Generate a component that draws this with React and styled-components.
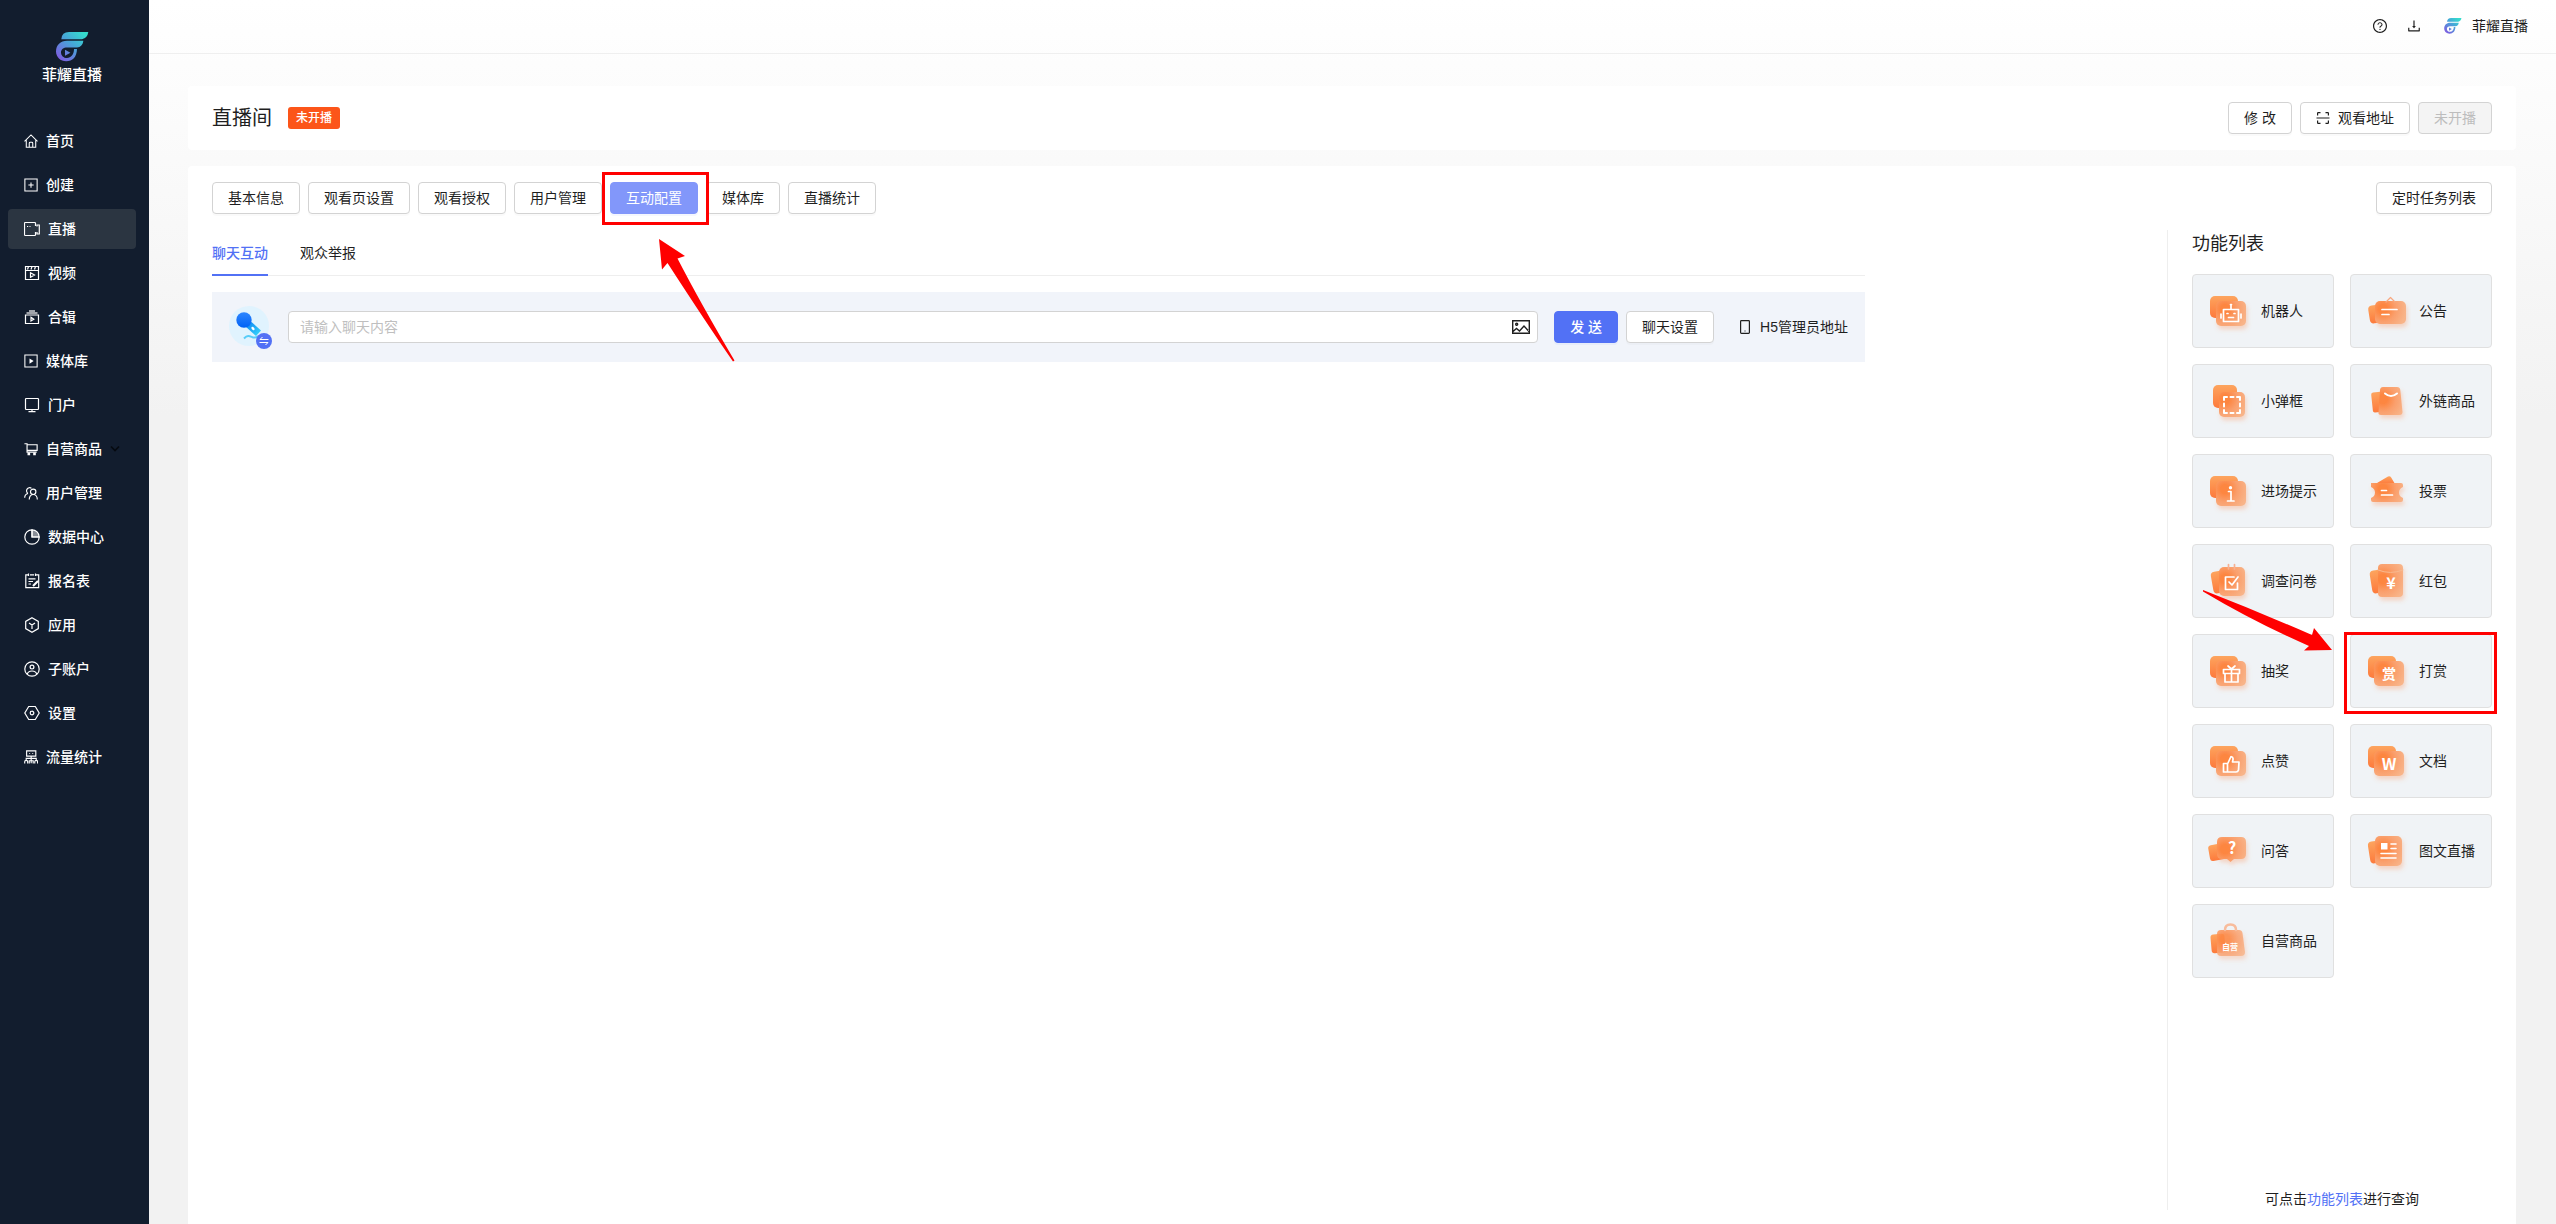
import React, { useId } from 'react';
import styled, { createGlobalStyle, css } from 'styled-components';
import { AiOutlineQuestionCircle, AiOutlineDownload } from 'react-icons/ai';

const primary = '#5271f5';
const ink = '#1f1f1f';

const GlobalStyle = createGlobalStyle`
  *, *::before, *::after { box-sizing: border-box; }
  body {
    margin: 0;
    color: ${ink};
    font: 14px/22px "Liberation Sans", "Noto Sans CJK SC", sans-serif;
  }
  button, input { font: inherit; color: inherit; }
  svg { display: block; flex: none; }
`;

/* ---------- page frame ---------- */

const Shell = styled.div`
  display: flex;
  height: 100vh;
  overflow: hidden;
`;

const Sidebar = styled.aside`
  flex: none;
  width: 149px;
  background: #121d2e;
  color: #fff;
`;

const Brand = styled.div`
  display: flex;
  flex-direction: column;
  align-items: center;
  gap: 2px;
  width: 144px;
  padding-top: 32px;
  height: 121px;
  font-size: 15px;
  font-weight: 500;
`;

const Menu = styled.nav`
  display: flex;
  flex-direction: column;
  gap: 4px;
  width: 144px;
  padding: 0 8px;
`;

const MenuLink = styled.a`
  display: flex;
  align-items: center;
  gap: 8px;
  height: 40px;
  padding: 0 16px;
  border-radius: 4px;
  color: #fff;
  font-weight: 500;
  white-space: nowrap;
  text-decoration: none;
  background: ${(p) => (p.$active ? '#2b3541' : 'transparent')};
`;

const Page = styled.div`
  display: flex;
  flex: 1;
  flex-direction: column;
  min-width: 0;
  background: linear-gradient(#fff, #f2f2f2 34%);
`;

const TopBar = styled.header`
  display: flex;
  align-items: center;
  justify-content: flex-end;
  gap: 18px;
  height: 54px;
  padding: 0 28px 2px;
  border-bottom: 1px solid #efefef;
`;

const IconButton = styled.button`
  display: flex;
  padding: 0;
  border: 0;
  background: none;
  font-size: 16px;
`;

const Account = styled.a`
  display: flex;
  align-items: center;
  gap: 10px;
  margin-left: 4px;
  color: ${ink};
  text-decoration: none;
`;

const Content = styled.main`
  display: flex;
  flex: 1;
  flex-direction: column;
  gap: 16px;
  min-height: 0;
  padding: 32px 40px 0 39px;
`;

const RoomCard = styled.section`
  display: flex;
  align-items: center;
  gap: 16px;
  height: 64px;
  padding: 0 24px;
  border-radius: 4px;
  background: #fff;
`;

const RoomTitle = styled.h1`
  margin: 0;
  font-size: 20px;
  line-height: 28px;
  font-weight: 400;
`;

const StatusTag = styled.span`
  padding: 0 8px;
  border-radius: 3px;
  background: #fc5519;
  color: #fff;
  font-size: 12px;
  font-weight: 500;
`;

const ButtonRow = styled.div`
  display: flex;
  gap: 8px;
  margin-left: ${(p) => (p.$end ? 'auto' : '0')};
`;

const Button = styled.button`
  display: flex;
  align-items: center;
  justify-content: center;
  gap: 8px;
  height: 32px;
  padding: 0 15px;
  border: 1px solid #d3d3d3;
  border-radius: 4px;
  background: #fff;
  box-shadow: 0 2px 0 rgba(0, 0, 0, 0.02);
  white-space: nowrap;
  ${(p) =>
    p.$tone &&
    css`
      border-color: ${p.$tone};
      background: ${p.$tone};
      color: #fff;
      box-shadow: 0 2px 0 rgba(82, 113, 245, 0.06);
      font-weight: ${p.$strong ? 500 : 400};
    `}
  &:disabled {
    background: #f4f4f4;
    color: #bdbdbd;
    box-shadow: none;
  }
`;

const Panel = styled.section`
  display: flex;
  flex: 1;
  flex-direction: column;
  gap: 16px;
  min-height: 0;
  padding: 16px 24px 14px;
  border-radius: 4px 4px 0 0;
  background: #fff;
`;

const PanelHead = styled.div`
  display: flex;
  justify-content: space-between;
`;

const Workspace = styled.div`
  display: grid;
  grid-template-columns: minmax(0, 1fr) 325px;
  gap: 302px;
  flex: 1;
  min-height: 0;
`;

/* ---------- chat ---------- */

const ChatTabs = styled.div`
  display: flex;
  gap: 32px;
  height: 46px;
  margin-bottom: 16px;
  box-shadow: inset 0 -1px #eee;
`;

const ChatTab = styled.button`
  padding: 2px 0 0;
  border: 0;
  border-bottom: 2px solid ${(p) => (p.$active ? primary : 'transparent')};
  background: none;
  color: ${(p) => (p.$active ? primary : ink)};
  font-weight: ${(p) => (p.$active ? 500 : 400)};
`;

const ChatBar = styled.form`
  display: flex;
  align-items: center;
  gap: 16px;
  height: 70px;
  padding: 0 17px;
  background: #f1f4fa;
`;

const MessageBox = styled.div`
  display: flex;
  flex: 1;
  align-items: center;
  height: 32px;
  padding: 0 7px 0 11px;
  border: 1px solid #d3d3d3;
  border-radius: 4px;
  background: #fff;
`;

const MessageInput = styled.input`
  flex: 1;
  min-width: 0;
  padding: 0;
  border: 0;
  outline: 0;
  background: none;
  &::placeholder { color: #bfbfbf; }
`;

const AdminLink = styled.a`
  display: flex;
  align-items: center;
  gap: 8px;
  margin-left: 8px;
  color: ${ink};
  text-decoration: none;
`;

/* ---------- features ---------- */

const FeaturePanel = styled.aside`
  display: flex;
  flex-direction: column;
  padding-left: 24px;
  border-left: 1px solid #eee;
`;

const FeatureTitle = styled.h2`
  margin: 0 0 16px;
  font-size: 18px;
  line-height: 28px;
  font-weight: 400;
`;

const FeatureGrid = styled.div`
  display: grid;
  grid-template-columns: repeat(2, minmax(0, 1fr));
  gap: 16px;
`;

const FeatureButton = styled.button`
  display: flex;
  align-items: center;
  gap: 8px;
  width: 100%;
  height: 74px;
  padding: 0 12px;
  border: 1px solid #e0e0e0;
  border-radius: 4px;
  background: #f0f3f6;
  text-align: left;
  white-space: nowrap;
`;

const Hint = styled.p`
  margin: auto 0 0;
  text-align: center;
`;

const HintLink = styled.a`
  color: ${primary};
  text-decoration: none;
`;

/* ---------- callouts ---------- */

const Marked = styled.div`
  position: relative;
`;

const Frame = styled.span`
  position: absolute;
  z-index: 1;
  inset: ${(p) => p.$inset};
  border: 3px solid #f00;
  pointer-events: none;
`;

const Arrow = styled.svg`
  position: absolute;
  z-index: 2;
  left: ${(p) => p.$left}px;
  top: ${(p) => p.$top}px;
  fill: #f00;
  pointer-events: none;
`;

/* ---------- drawings ---------- */

function Logo({ width, height }) {
  const id = useId();
  return (
    <svg width={width} height={height} viewBox="0 0 33 30">
      <defs>
        <linearGradient id={id} x1="1" y1="0" x2="0" y2="1">
          <stop offset="0.1" stopColor="#35dccd" />
          <stop offset="0.45" stopColor="#46a6d8" />
          <stop offset="0.9" stopColor="#7c5fe0" />
        </linearGradient>
      </defs>
      <path
        fill={`url(#${id})`}
        d="M5.3 7.2Q5.8 0 13 0H32.3Q31.5 6 26 7.2ZM27.3 8.7H11C4.5 8.7 0 13 0 19.5 0 25 4.5 29.3 10.2 29.3 16.5 29.3 20.8 25 21 17L18 17C18 22.5 15 26 11 26 7.5 26 5 23.4 5 20.4 5 17.5 7.5 15.5 11 15.5H21C24.5 15.3 27 12.5 27.3 8.7ZM9 17.8 14.4 20.8 9 23.8Z"
      />
    </svg>
  );
}

const menuIcons = {
  home: <path d="M.6 8.300 8 1l7.400 7.300M2.600 7v8.200h10.800V7M6 15v-4.500q0-1 1-1h2q1 0 1 1V15" />,
  create: <path d="M1 1.200h14v13.600H1zM8 5v6M5 8h6" />,
  live: <path d="M11.500 5V2.300q0-.8-.8-.8H1.300q-.8 0-.8.8v11.400q0 .8.8.8h9.400q.8 0 .8-.8V11M13 5.500V4h2.300v9H13v-2M3 5.500h1.200M5.500 5.500h1" />,
  video: <path d="M1.500 1.500h13v13h-13zM1.500 5.500h13M4.500 1.500l-1 3M8 1.500l-1 3M11.500 1.500l-1 3M6.500 7.800l4 2.200-4 2.200z" />,
  album: <><path d="M1.500 6h13v8.500h-13zM7 8.300 9.800 10.200 7 12z" /><path d="M2.500 4h11M5 2h6" strokeWidth="2" opacity=".6" /></>,
  media: <><path d="M1 1.200h14v13.600H1z" /><path d="M6.300 5 11 8l-4.700 3z" fill="#fff" stroke="none" /></>,
  portal: <path d="M1.500 2.300q0-.8.8-.8h11.400q.8 0 .8.8v9.400q0 .8-.8.8H2.300q-.8 0-.8-.8zM8 12.500v2M4.500 14.700h7" />,
  cart: <><path d="M.5 2h3v9.500h11M3.500 3.200H15V9.500H3.500" strokeWidth="1.300" /><path d="M4 12h3v3H4zM10.500 12h3v3h-3z" fill="#fff" stroke="none" /></>,
  users: <path d="M4.500 8.500A3.600 3.600 0 1 1 8.500 2.500M.8 13.500c0-2.500 1.500-4.500 3.700-5M10.500 3.500a3.100 3.100 0 1 1 0 6.200 3.100 3.100 0 0 1 0-6.200M6 15.500c0-3.300 1.800-5.800 4.500-5.800s4.700 2.500 4.700 5.800" strokeWidth="1.300" />,
  pie: <><path d="M8 .8A7.200 7.200 0 1 0 15.200 8H8z" /><path d="M8 .8A7.200 7.200 0 0 1 15.200 8H8z" fill="#fff" fillOpacity=".5" /></>,
  form: <><path d="M4 1.800H1.800v12.900h12.900V1.800H12M6 1.800h4M4.500.500v2.500M11.500.500v2.500M4.500 5.800h7M4.500 8.500h4.500M4.500 11h2.500" /><path d="M9 13l5-5" strokeWidth="2.200" /></>,
  app: <path d="M8 .8l6.300 3.600v7.200L8 15.200l-6.300-3.600V4.400zM5 6l3 2 3-2M8 8v4" />,
  person: <path d="M8 .8a7.200 7.200 0 1 1 0 14.400A7.200 7.200 0 0 1 8 .8M8 4.200a1.900 1.900 0 1 1 0 3.800 1.900 1.900 0 0 1 0-3.800M3.300 13.200c.5-2.200 2-3.200 4.700-3.200s4.200 1 4.700 3.200" />,
  setting: <path d="M4.700 1.500h6.600L15.200 8l-3.900 6.500H4.700L.8 8zM8 6.200a1.800 1.800 0 1 1 0 3.600 1.800 1.800 0 0 1 0-3.600" />,
  flow: <path d="M3 1h10.500v6H3zM8.200 7v8M2.500 11.500v-2h11.500v2M.8 15.300v-2q0-1.500 1.700-1.500t1.700 1.500v2M6 15.300v-3h4.500v3M12.300 15.300v-2q0-1.500 1.600-1.500t1.600 1.500v2M6 4h1M9.500 4h1" strokeWidth="1.300" />,
};

const MenuIcon = ({ name, size }) => (
  <svg width={size} height={size} viewBox="0 0 16 16" fill="none" stroke="#fff" strokeWidth="1.200">
    {menuIcons[name]}
  </svg>
);

const Chevron = () => (
  <svg width="10" height="8" viewBox="0 0 10 8" fill="none" stroke="#060a10" strokeWidth="1.600">
    <path d="M1 1.500l4 4 4-4" />
  </svg>
);

const ScanIcon = () => (
  <svg width="14" height="14" viewBox="0 0 14 14" fill="none" stroke={ink} strokeWidth="1.200">
    <path d="M1.600 4.500V2.200q0-.6.6-.6h2.300M9.500 1.600h2.300q.6 0 .6.6v2.300M12.400 9.500v2.300q0 .6-.6.6H9.500M4.500 12.400H2.200q-.6 0-.6-.6V9.500M.500 7h13" />
  </svg>
);

const PhoneIcon = () => (
  <svg width="14" height="14" viewBox="0 0 14 14" fill="none" stroke={ink} strokeWidth="1.200">
    <rect x="2.600" y=".6" width="8.800" height="12.800" rx=".8" />
    <path d="M6.500 11h1" />
  </svg>
);

const PictureIcon = () => (
  <svg width="18" height="14" viewBox="0 0 18 14" fill="none" stroke={ink} strokeWidth="1.400">
    <path d="M.7.700h16.600v12.600H.700zM1 11.500l3.500-3 3 2.500 4.500-5 5 5.500" />
    <circle cx="4.700" cy="4.200" r="1" />
  </svg>
);

function MicAvatar() {
  const id = useId();
  return (
    <svg width="43" height="44" viewBox="1 0 43 44">
      <defs>
        <linearGradient id={`${id}h`} x1="0" y1="0" x2="0" y2="1">
          <stop stopColor="#2c86ff" />
          <stop offset="1" stopColor="#0062f5" />
        </linearGradient>
        <linearGradient id={`${id}b`} x1="0" y1="0" x2="1" y2="1">
          <stop stopColor="#0a7df2" />
          <stop offset="1" stopColor="#3be0fb" />
        </linearGradient>
      </defs>
      <circle cx="21" cy="21" r="20" fill="#e0f3fe" />
      <path d="M16 33.500c4-4 6-2 9-1 2 .5 3-.5 5-1" fill="none" stroke="#58cdf8" strokeWidth="2" />
      <path d="M17.500 21.500 23.500 17 33 25.500 28 31z" fill={`url(#${id}b)`} />
      <ellipse cx="25" cy="23.500" rx="1.300" ry="2" fill="#fff" transform="rotate(-40 25 23.500)" />
      <circle cx="16" cy="15" r="7.700" fill={`url(#${id}h)`} />
      <circle cx="36" cy="36" r="8" fill={primary} />
      <path d="M32 34.500h8.500M34.500 32 32 34.500M31.500 37.500h8.500L37.500 40" fill="none" stroke="#fff" strokeWidth="1" />
    </svg>
  );
}

const back = {
  wide: <rect x="5" y="9" width="28" height="22" rx="5" />,
  square: <rect x="8" y="8" width="24" height="23" rx="5" />,
  notice: <rect x="6" y="18" width="14" height="18" rx="4" transform="rotate(-9 13 27)" />,
  survey: <rect x="7" y="14" width="14" height="22" rx="4" transform="rotate(-10 14 25)" />,
  qa: <rect x="4" y="17" width="18" height="16" rx="3" transform="rotate(-10 13 25)" />,
  bag: <rect x="9" y="15" width="14" height="20" rx="2" transform="rotate(-6 16 25)" />,
  packet: <rect x="8" y="13" width="14" height="23" rx="4" transform="rotate(-9 15 25)" />,
  article: <rect x="6" y="14" width="14" height="22" rx="4" transform="rotate(-9 13 25)" />,
  shop: <rect x="6" y="17" width="14" height="19" rx="3" transform="rotate(-5 13 26)" />,
  ticket: <path d="M14 16 25 9.500q2-1 3 .8L32 17z" />,
};

const front = {
  wide: <rect x="11" y="14" width="30" height="25" rx="5" />,
  square: <rect x="14" y="15" width="26" height="25" rx="5" />,
  notice: <rect x="12" y="14" width="31" height="23" rx="5" />,
  bag: <path d="M19 10h15q3 0 3.300 3L39.500 35q0 3-3 3H18q-3 0-2.500-3L17 13q.3-3 3-3z" />,
  ticket: <path d="M8 16h30q2 0 2 2v2q-4 1.500-4 5.500t4 5.500v2q0 2-2 2H10q-2 0-2-2v-2q4-1.500 4-5.500T8 20z" />,
  sheet: <rect x="14" y="10" width="26" height="29" rx="5" />,
  packet: <rect x="15" y="7" width="25" height="33" rx="4" />,
  bubble: <path d="M17 10h19q5 0 5 5v12q0 5-5 5h-7l-3.500 3-3.500-3h-5q-5 0-5-5V15q0-5 5-5z" />,
  page: <rect x="12" y="9" width="27" height="30" rx="5" />,
  shop: <path d="M17 13h17q3 0 3.500 3L40 35q0 4-4 4H16q-4 0-4-4V17q0-4 4-4z" opacity=".85" />,
};

const glyphText = (text, x, y, size) => (
  <text
    x={x}
    y={y}
    fontSize={size}
    fontWeight="700"
    fontFamily='"Noto Sans CJK SC", sans-serif'
    textAnchor="middle"
    fill="#fff"
    stroke="none"
  >
    {text}
  </text>
);

const featureArt = {
  robot: ['wide', 'wide', <path d="M18.500 22.500h15v12h-15zM26 18v4M16 27v4M36 27v4M22 26.500h1M29 26.500h1M23.500 30.500h5M25.500 17.500h1" />],
  notice: ['notice', 'notice', <><path d="M19 22.500h15M19 27.500h7" /><path d="M23 15l4.500-4.500L32 15" stroke="#f8a880" strokeWidth="1.200" /></>],
  popup: ['square', 'square', <path d="M19 23v-3h3M25.500 20h3M32 20h3v3M35 26.500v3M35 33v3h-3M28.500 36h-3M22 36h-3v-3M19 29.500v-3" strokeWidth="2" />],
  goods: ['bag', 'bag', <path d="M22 16.500q6 5 12 0" strokeWidth="2" />],
  enter: ['wide', 'wide', <><circle cx="25.500" cy="20.800" r="1.700" fill="#fff" stroke="none" /><path d="M23.500 24.500h2.500V34M22.500 34h6.500" /></>],
  vote: ['ticket', 'ticket', <path d="M18.500 23.500h5M18.500 28h11" />],
  survey: ['survey', 'sheet', <><path d="M29 20h-8.500v12.500h12V26M24 25l3 3 6-8" /><path d="M23.500 7.500V12M29.500 7.500V12" stroke="#f8b090" /></>],
  packet: ['packet', 'packet', <><path d="M15 13q12.500 5 25 0" stroke="#f8b98f" strokeWidth="1" />{glyphText('¥', 28, 32, 16)}</>],
  lottery: ['wide', 'wide', <path d="M18.500 22.500h16v4h-16zM20 26.500v8.500h13v-8.500M26.500 22.500V35M23 19l3.500 3 3.500-3" />],
  reward: ['wide', 'wide', glyphText('赏', 26, 32, 14)],
  like: ['wide', 'wide', <path d="M18.500 26.500h4V35h-4zM22.500 27l3.500-7.500q2.500.5 2 3L27.500 25H34L33.500 33q-.5 2-2.500 2h-8.500z" />],
  doc: ['wide', 'wide', glyphText('W', 26, 33, 16)],
  qa: ['qa', 'bubble', glyphText('?', 27, 27, 16)],
  article: ['article', 'page', <><path d="M18 16h6.500v6.500H18z" fill="#fff" stroke="none" /><path d="M28 17h5M28 21.500h5M18 26.500h15M18 31h15" strokeWidth="1.600" /></>],
  shop: ['shop', 'shop', <><path d="M20 13q0-5.500 5.500-5.500T31 13" stroke="#f8bc9c" strokeWidth="2.500" />{glyphText('自营', 25, 33, 8)}</>],
};

function FeatureIcon({ name }) {
  const id = useId();
  const [backShape, frontShape, glyph] = featureArt[name];
  return (
    <svg width="48" height="48" viewBox="0 0 48 48">
      <defs>
        <linearGradient id={`${id}b`} x1="0" y1="0" x2="0" y2="1">
          <stop stopColor="#fda45e" />
          <stop offset="1" stopColor="#fd7a3c" />
        </linearGradient>
        <radialGradient id={`${id}f`} gradientUnits="userSpaceOnUse" cx="20" cy="22" r="23">
          <stop offset="0.200" stopColor="#fd8641" />
          <stop offset="0.550" stopColor="#fa9f6c" />
          <stop offset="1" stopColor="#f8b489" />
        </radialGradient>
        <filter id={`${id}s`} x="-30%" y="-30%" width="170%" height="180%">
          <feDropShadow dx="1.500" dy="3.500" stdDeviation="2" floodColor="#fd8a50" floodOpacity="0.300" />
        </filter>
      </defs>
      <g fill={`url(#${id}b)`}>{back[backShape]}</g>
      <g fill={`url(#${id}f)`} filter={`url(#${id}s)`}>{front[frontShape]}</g>
      <g fill="none" stroke="#fff" strokeWidth="1.700" strokeLinecap="round" strokeLinejoin="round">
        {glyph}
      </g>
    </svg>
  );
}

/* ---------- data ---------- */

const menu = [
  ['home', '首页', 14],
  ['create', '创建', 14],
  ['live', '直播', 16],
  ['video', '视频', 16],
  ['album', '合辑', 16],
  ['media', '媒体库', 14],
  ['portal', '门户', 16],
  ['cart', '自营商品', 14],
  ['users', '用户管理', 14],
  ['pie', '数据中心', 16],
  ['form', '报名表', 16],
  ['app', '应用', 16],
  ['person', '子账户', 16],
  ['setting', '设置', 16],
  ['flow', '流量统计', 14],
];

const tabs = ['基本信息', '观看页设置', '观看授权', '用户管理', '互动配置', '媒体库', '直播统计'];

const features = [
  ['robot', '机器人'],
  ['notice', '公告'],
  ['popup', '小弹框'],
  ['goods', '外链商品'],
  ['enter', '进场提示'],
  ['vote', '投票'],
  ['survey', '调查问卷'],
  ['packet', '红包'],
  ['lottery', '抽奖'],
  ['reward', '打赏'],
  ['like', '点赞'],
  ['doc', '文档'],
  ['qa', '问答'],
  ['article', '图文直播'],
  ['shop', '自营商品'],
];

export default function App() {
  return (
    <Shell>
      <GlobalStyle />
      <Sidebar>
        <Brand>
          <Logo width={33} height={30} />
          <span>菲耀直播</span>
        </Brand>
        <Menu>
          {menu.map(([icon, label, size]) => (
            <MenuLink key={icon} href="#" $active={icon === 'live'}>
              <MenuIcon name={icon} size={size} />
              {label}
              {icon === 'cart' && <Chevron />}
            </MenuLink>
          ))}
        </Menu>
      </Sidebar>
      <Page>
        <TopBar>
          <IconButton type="button" aria-label="帮助"><AiOutlineQuestionCircle /></IconButton>
          <IconButton type="button" aria-label="下载"><AiOutlineDownload /></IconButton>
          <Account href="#">
            <Logo width={18} height={16} />
            菲耀直播
          </Account>
        </TopBar>
        <Content>
          <RoomCard>
            <RoomTitle>直播间</RoomTitle>
            <StatusTag>未开播</StatusTag>
            <ButtonRow $end>
              <Button type="button">修 改</Button>
              <Button type="button"><ScanIcon />观看地址</Button>
              <Button type="button" disabled>未开播</Button>
            </ButtonRow>
          </RoomCard>
          <Panel>
            <PanelHead>
              <ButtonRow>
                {tabs.map((label) =>
                  label === '互动配置' ? (
                    <Marked key={label}>
                      <Button type="button" $tone="#8297fa">{label}</Button>
                      <Frame $inset="-10px -11px -11px -8px" />
                      <Arrow $left={49} $top={57} width="76" height="123" viewBox="0 0 76 123">
                        <path d="M0 0 26 17 18.500 19.500Q42 65 75.500 121.500L74 122.500Q48 85 8.500 24L3 30.500Z" />
                      </Arrow>
                    </Marked>
                  ) : (
                    <Button key={label} type="button">{label}</Button>
                  ),
                )}
              </ButtonRow>
              <Button type="button">定时任务列表</Button>
            </PanelHead>
            <Workspace>
              <div>
                <ChatTabs>
                  <ChatTab type="button" $active>聊天互动</ChatTab>
                  <ChatTab type="button">观众举报</ChatTab>
                </ChatTabs>
                <ChatBar>
                  <MicAvatar />
                  <MessageBox>
                    <MessageInput aria-label="聊天内容" placeholder="请输入聊天内容" />
                    <PictureIcon />
                  </MessageBox>
                  <ButtonRow>
                    <Button type="button" $tone={primary} $strong>发 送</Button>
                    <Button type="button">聊天设置</Button>
                  </ButtonRow>
                  <AdminLink href="#"><PhoneIcon />H5管理员地址</AdminLink>
                </ChatBar>
              </div>
              <FeaturePanel>
                <FeatureTitle>功能列表</FeatureTitle>
                <FeatureGrid>
                  {features.map(([icon, label]) => (
                    <Marked key={icon}>
                      <FeatureButton type="button">
                        <FeatureIcon name={icon} />
                        {label}
                      </FeatureButton>
                      {icon === 'reward' && (
                        <>
                          <Frame $inset="-2px -5px -6px -6px" />
                          <Arrow $left={-148} $top={-45} width="131" height="62" viewBox="0 0 131 62">
                            <path d="M1 1Q55 22 110 46L112 39 130 61 102 61.500 107 57Q52 33 1 2.500Z" />
                          </Arrow>
                        </>
                      )}
                    </Marked>
                  ))}
                </FeatureGrid>
                <Hint>
                  可点击<HintLink href="#">功能列表</HintLink>进行查询
                </Hint>
              </FeaturePanel>
            </Workspace>
          </Panel>
        </Content>
      </Page>
    </Shell>
  );
}
